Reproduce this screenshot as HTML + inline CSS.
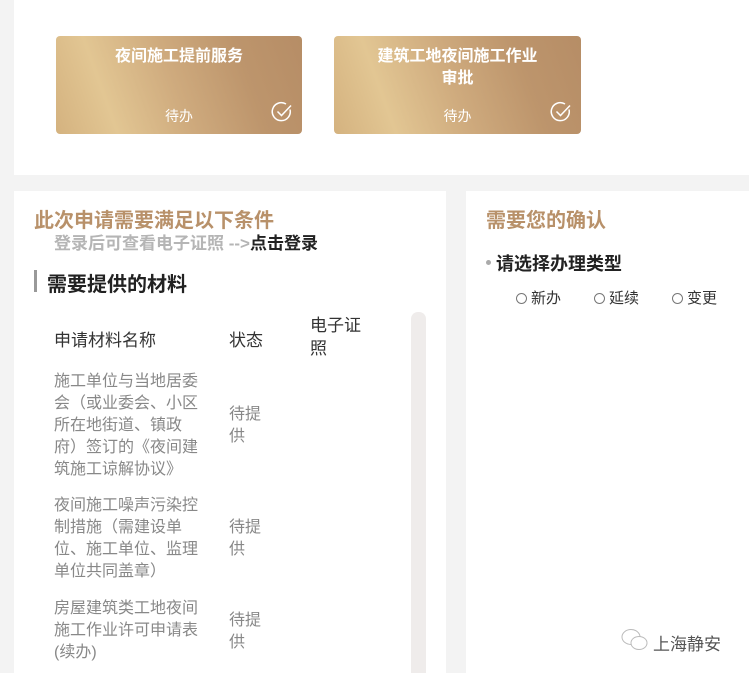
<!DOCTYPE html>
<html><head><meta charset="utf-8"><style>
*{margin:0;padding:0;box-sizing:border-box}
body{width:749px;height:673px;overflow:hidden;background:#f3f3f3;position:relative;font-family:"Liberation Sans","Noto Sans CJK SC",sans-serif}
.a{position:absolute;white-space:nowrap}
.card{position:absolute;top:36px;height:98px;border-radius:4px;background:linear-gradient(70deg,#d4b27f 0%,#e2c693 22%,#cfab7e 48%,#bd956c 75%,#b68d66 100%);color:#fff}
.card .t{position:absolute;left:0;right:0;top:10px;text-align:center;font-weight:bold;font-size:16px;line-height:22px}
.card .s{position:absolute;left:0;right:0;top:70px;text-align:center;font-size:14px}
.card svg{position:absolute;right:9px;top:65px}
.g{color:#888;font-size:16px;line-height:22px;white-space:normal}
.r{display:inline-block;width:11px;height:11px;border:1px solid #777;border-radius:50%;vertical-align:-1px;margin-right:4px}
</style></head><body>
<div class="a" style="left:14px;top:0;width:735px;height:175px;background:#fff"></div>
<div class="card" style="left:56px;width:246px"><div class="t">夜间施工提前服务</div><div class="s">待办</div>
<svg width="22" height="22" viewBox="0 0 22 22"><path d="M19 8.5A9 9 0 1 1 15 3" fill="none" stroke="#fff" stroke-width="1.5"/><path d="M6.5 10.5l4 4L20 4.5" fill="none" stroke="#fff" stroke-width="1.5"/></svg></div>
<div class="card" style="left:334px;width:247px"><div class="t">建筑工地夜间施工作业<br>审批</div><div class="s">待办</div>
<svg width="22" height="22" viewBox="0 0 22 22"><path d="M19 8.5A9 9 0 1 1 15 3" fill="none" stroke="#fff" stroke-width="1.5"/><path d="M6.5 10.5l4 4L20 4.5" fill="none" stroke="#fff" stroke-width="1.5"/></svg></div>

<div class="a" style="left:14px;top:191px;width:432px;height:482px;background:#fff"></div>
<div class="a" style="left:466px;top:191px;width:283px;height:482px;background:#fff"></div>

<div class="a" style="left:34px;top:204px;font-size:20px;font-weight:bold;color:#b8916a">此次申请需要满足以下条件</div>
<div class="a" style="left:54px;top:229px;font-size:17px;font-weight:bold;color:#b5b5b5">登录后可查看电子证照 --&gt;<span style="color:#222">点击登录</span></div>
<div class="a" style="left:34px;top:270px;width:3px;height:22px;background:#999"></div>
<div class="a" style="left:47px;top:268px;font-size:20px;font-weight:bold;color:#222">需要提供的材料</div>

<div class="a" style="left:411px;top:312px;width:15px;height:361px;background:#efeceb;border-radius:7px 7px 0 0"></div>

<div class="a" style="left:54px;top:326px;font-size:17px;color:#333">申请材料名称</div>
<div class="a" style="left:229px;top:326px;font-size:17px;color:#333">状态</div>
<div class="a" style="left:310px;top:314px;font-size:17px;color:#333;line-height:23px">电子证<br>照</div>

<div class="a g" style="left:54px;top:371px;width:148px">施工单位与当地居委会（或业委会、小区所在地街道、镇政府）签订的《夜间建筑施工谅解协议》</div>
<div class="a g" style="left:229px;top:404px;width:34px">待提供</div>
<div class="a g" style="left:54px;top:495px;width:148px">夜间施工噪声污染控制措施（需建设单位、施工单位、监理单位共同盖章）</div>
<div class="a g" style="left:229px;top:517px;width:34px">待提供</div>
<div class="a g" style="left:54px;top:598px;width:148px">房屋建筑类工地夜间施工作业许可申请表(续办)</div>
<div class="a g" style="left:229px;top:610px;width:34px">待提供</div>

<div class="a" style="left:486px;top:204px;font-size:20px;font-weight:bold;color:#b8916a">需要您的确认</div>
<div class="a" style="left:486px;top:260px;width:5px;height:5px;border-radius:50%;background:#aaa"></div>
<div class="a" style="left:496px;top:250px;font-size:18px;font-weight:bold;color:#222">请选择办理类型</div>
<div class="a" style="left:516px;top:287px;font-size:15px;color:#333"><span class="r"></span>新办<span style="display:inline-block;width:33px"></span><span class="r"></span>延续<span style="display:inline-block;width:33px"></span><span class="r"></span>变更</div>

<svg class="a" style="left:620px;top:628px" width="30" height="24" viewBox="0 0 30 24"><ellipse cx="11" cy="9" rx="9" ry="7.5" fill="none" stroke="#bbb"/><ellipse cx="19" cy="15" rx="8" ry="6.5" fill="#fff" stroke="#bbb"/></svg>
<div class="a" style="left:653px;top:630px;font-size:17px;color:#555">上海静安</div>
</body></html>
